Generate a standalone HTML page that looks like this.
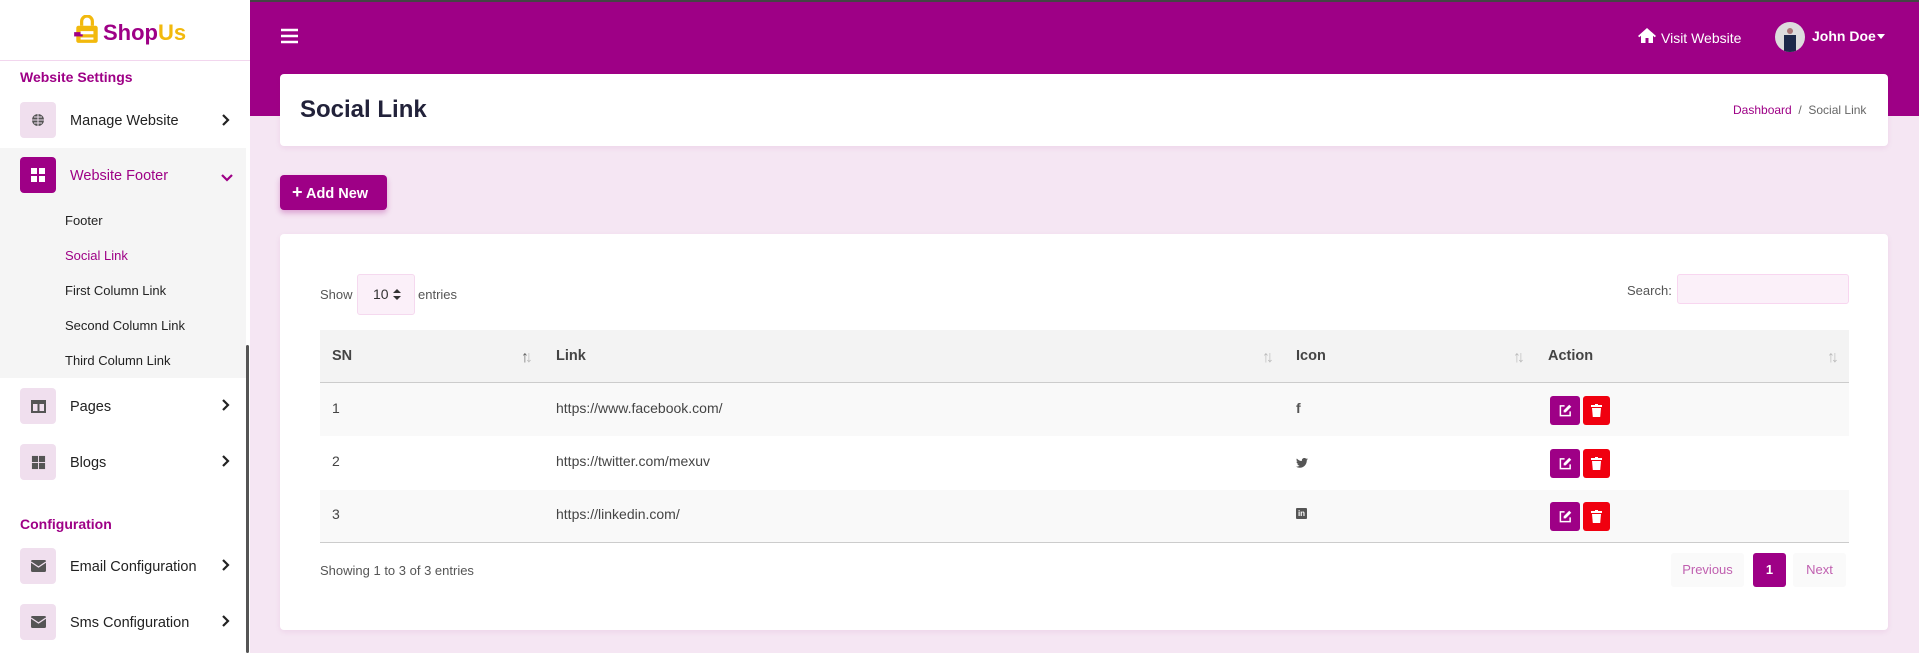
<!DOCTYPE html>
<html><head><meta charset="utf-8"><style>
*{box-sizing:border-box;margin:0;padding:0}
body{width:1919px;height:653px;overflow:hidden;background:#f5e6f3;font-family:"Liberation Sans",sans-serif;position:relative;color:#333}
.a{position:absolute}
.top{left:0;top:0;width:1919px;height:116px;background:#9e0086;border-top:2px solid #444}
.side{left:0;top:0;width:250px;height:653px;background:#fff}
.sh{color:#9e0086;font-weight:bold;font-size:14px}
.ib{width:36px;height:36px;border-radius:4px;background:#f0dfee;display:flex;align-items:center;justify-content:center}
.it{font-size:14.5px;color:#222}
.chev{width:10px;height:12px}
.sub{font-size:13px;color:#222;left:65px}
.card{background:#fff;border-radius:4px;box-shadow:0 2px 6px rgba(150,0,130,.08)}
.th{font-weight:bold;font-size:14.5px;color:#444}
.srt{color:#bbb;font-size:16px;letter-spacing:-4px}
.td{font-size:14px;color:#444}
.btn{width:30px;height:29px;border-radius:3px;display:flex;align-items:center;justify-content:center}
</style></head><body>
<div class="a top"></div>
<div class="a side"></div>
<!-- logo -->
<div class="a" style="left:73px;top:15px;width:28px;height:30px">
<svg width="28" height="30" viewBox="0 0 26 28"><path d="M8 10V6a5 5 0 0 1 10 0v4" fill="none" stroke="#f2b90d" stroke-width="3"/><rect x="3" y="10" width="20" height="16" rx="2" fill="#f2b90d"/><rect x="1" y="16" width="8" height="4" fill="#9e0086"/><path d="M7 15h12v3H7zM7 21h12v2H7z" fill="#fff"/></svg></div>
<div class="a" style="left:103px;top:20px;font-size:22px;font-weight:bold;color:#9e0086">Shop<span style="color:#f2b90d">Us</span></div>
<div class="a" style="left:0;top:60px;width:250px;height:1px;background:#f2d6ee"></div>
<div class="a sh" style="left:20px;top:69px">Website Settings</div>
<div class="a ib" style="left:20px;top:102px"><svg width="14" height="14" viewBox="0 0 14 14"><circle cx="7" cy="7" r="6" fill="#555"/><path d="M1 7h12M7 1v12M3 4h8M3 10h8" stroke="#f0dfee" stroke-width="1"/></svg></div>
<div class="a it" style="left:70px;top:113px">Manage Website</div>
<svg class="a chev" style="left:221px;top:114px" viewBox="0 0 10 12"><path d="M2 1l5 5-5 5" fill="none" stroke="#222" stroke-width="2.2"/></svg>
<div class="a" style="left:0;top:148px;width:246px;height:230px;background:#f5f5f5"></div>
<div class="a ib" style="left:20px;top:157px;background:#9e0086"><svg width="16" height="16" viewBox="0 0 16 16" fill="#fff"><rect x="1" y="1" width="6" height="6"/><rect x="9" y="1" width="6" height="6"/><rect x="1" y="9" width="6" height="6"/><rect x="9" y="9" width="6" height="6"/></svg></div>
<div class="a it" style="left:70px;top:168px;color:#9e0086">Website Footer</div>
<div class="a" style="left:221px;top:170px"><svg width="12" height="10" viewBox="0 0 12 10"><path d="M1 2l5 5 5-5" fill="none" stroke="#9e0086" stroke-width="2.2"/></svg></div>
<div class="a sub" style="top:213px">Footer</div>
<div class="a sub" style="top:248px;color:#9e0086">Social Link</div>
<div class="a sub" style="top:283px">First Column Link</div>
<div class="a sub" style="top:318px">Second Column Link</div>
<div class="a sub" style="top:353px">Third Column Link</div>
<div class="a ib" style="left:20px;top:388px"><svg width="15" height="13" viewBox="0 0 15 13"><rect x="1" y="1" width="13" height="11" fill="none" stroke="#555" stroke-width="2"/><path d="M7.5 1v11M1 3h13" stroke="#555" stroke-width="2"/></svg></div>
<div class="a it" style="left:70px;top:399px">Pages</div>
<svg class="a chev" style="left:221px;top:399px" viewBox="0 0 10 12"><path d="M2 1l5 5-5 5" fill="none" stroke="#222" stroke-width="2.2"/></svg>
<div class="a ib" style="left:20px;top:444px"><svg width="15" height="15" viewBox="0 0 16 16" fill="#555"><rect x="1" y="1" width="6.5" height="6.5"/><rect x="8.5" y="1" width="6.5" height="6.5"/><rect x="1" y="8.5" width="6.5" height="6.5"/><rect x="8.5" y="8.5" width="6.5" height="6.5"/></svg></div>
<div class="a it" style="left:70px;top:455px">Blogs</div>
<svg class="a chev" style="left:221px;top:455px" viewBox="0 0 10 12"><path d="M2 1l5 5-5 5" fill="none" stroke="#222" stroke-width="2.2"/></svg>
<div class="a sh" style="left:20px;top:516px">Configuration</div>
<div class="a ib" style="left:20px;top:548px"><svg width="15" height="12" viewBox="0 0 15 12"><rect x="0" y="0" width="15" height="12" rx="1.5" fill="#555"/><path d="M0 2l7.5 5L15 2" fill="none" stroke="#f0dfee" stroke-width="1.3"/></svg></div>
<div class="a it" style="left:70px;top:559px">Email Configuration</div>
<svg class="a chev" style="left:221px;top:559px" viewBox="0 0 10 12"><path d="M2 1l5 5-5 5" fill="none" stroke="#222" stroke-width="2.2"/></svg>
<div class="a ib" style="left:20px;top:604px"><svg width="15" height="12" viewBox="0 0 15 12"><rect x="0" y="0" width="15" height="12" rx="1.5" fill="#555"/><path d="M0 2l7.5 5L15 2" fill="none" stroke="#f0dfee" stroke-width="1.3"/></svg></div>
<div class="a it" style="left:70px;top:615px">Sms Configuration</div>
<svg class="a chev" style="left:221px;top:615px" viewBox="0 0 10 12"><path d="M2 1l5 5-5 5" fill="none" stroke="#222" stroke-width="2.2"/></svg>
<div class="a" style="left:246px;top:345px;width:3px;height:308px;background:#555;border-radius:2px"></div>
<!-- topbar -->
<svg class="a" style="left:281px;top:28px" width="17" height="16" viewBox="0 0 17 16"><path d="M0 2h17M0 8h17M0 14h17" stroke="#fff" stroke-width="2.6"/></svg>
<div class="a" style="left:1637px;top:27px"><svg width="20" height="17" viewBox="0 0 19 17"><path d="M9.5 1L0.5 9l1.3 1.3 1.7-1.5V16h4.5v-5h3v5h4.5V8.8l1.7 1.5L18.5 9z" fill="#fff"/></svg></div>
<div class="a" style="left:1661px;top:30px;color:#fff;font-size:14px">Visit Website</div>
<div class="a" style="left:1775px;top:22px;width:30px;height:30px;border-radius:50%;background:#ddd;overflow:hidden"><div style="margin:6px auto 0;width:6px;height:6px;border-radius:50%;background:#a77"></div><div style="margin:1px auto 0;width:12px;height:18px;background:#1d2a4a"></div></div>
<div class="a" style="left:1812px;top:28px;color:#fff;font-size:14px;font-weight:bold">John Doe</div>
<div class="a" style="left:1877px;top:34px;border:4px solid transparent;border-top:5px solid #fff"></div>
<!-- header card -->
<div class="a card" style="left:280px;top:74px;width:1608px;height:72px"></div>
<div class="a" style="left:300px;top:96px;font-size:24px;font-weight:bold;color:#22223a">Social Link</div>
<div class="a" style="left:1733px;top:103px;font-size:12px;color:#9e0086">Dashboard <span style="color:#666">&nbsp;/&nbsp; Social Link</span></div>
<!-- add new -->
<div class="a" style="left:280px;top:175px;width:107px;height:35px;background:#9e0086;border-radius:4px;color:#fff;font-weight:bold;font-size:14.5px;line-height:35px;padding-left:12px;box-shadow:0 3px 6px rgba(158,0,134,.3)"><span style="font-size:18px">+</span> Add New</div>
<!-- table card -->
<div class="a card" style="left:280px;top:234px;width:1608px;height:396px"></div>
<div class="a td" style="left:320px;top:287px;font-size:13px;color:#555">Show</div>
<div class="a" style="left:357px;top:274px;width:58px;height:41px;background:#fbf0f9;border:1px solid #f5d9ef;border-radius:3px;font-size:14px;line-height:39px;padding-left:15px;color:#333">10</div>
<svg class="a" style="left:393px;top:289px" width="8" height="11" viewBox="0 0 8 11"><path d="M4 0l4 4H0zM4 11L0 7h8z" fill="#333"/></svg>
<div class="a td" style="left:418px;top:287px;font-size:13px;color:#555">entries</div>
<div class="a td" style="left:1627px;top:283px;font-size:13px;color:#555">Search:</div>
<div class="a" style="left:1677px;top:274px;width:172px;height:30px;background:#fbf0f9;border:1px solid #f8d6f0;border-radius:3px"></div>
<div class="a" style="left:320px;top:330px;width:1529px;height:53px;background:#f3f3f3;border-bottom:1px solid #ccc"></div>
<div class="a" style="left:320px;top:383px;width:1529px;height:53px;background:#f9f9f9"></div>
<div class="a" style="left:320px;top:490px;width:1529px;height:53px;background:#f9f9f9;border-bottom:1px solid #ccc"></div>
<div class="a th" style="left:332px;top:348px">SN</div>
<div class="a th" style="left:556px;top:348px">Link</div>
<div class="a th" style="left:1296px;top:348px">Icon</div>
<div class="a th" style="left:1548px;top:348px">Action</div>
<div class="a srt" style="left:521px;top:349px;color:#666">↑<span style="color:#bbb">↓</span></div>
<div class="a srt" style="left:1262px;top:349px">↑↓</div>
<div class="a srt" style="left:1513px;top:349px">↑↓</div>
<div class="a srt" style="left:1827px;top:349px">↑↓</div>
<div class="a td" style="left:332px;top:400px">1</div><div class="a td" style="left:556px;top:400px">https://www.facebook.com/</div>
<div class="a td" style="left:332px;top:453px">2</div><div class="a td" style="left:556px;top:453px">https://twitter.com/mexuv</div>
<div class="a td" style="left:332px;top:506px">3</div><div class="a td" style="left:556px;top:506px">https://linkedin.com/</div>
<div class="a" style="left:1296px;top:400px;font-weight:bold;font-size:14px;color:#555">f</div>
<div class="a" style="left:1296px;top:455px"><svg width="12" height="10" viewBox="0 0 24 20"><path d="M24 2.4a10 10 0 0 1-2.8.8A5 5 0 0 0 23.3.4a10 10 0 0 1-3.1 1.2A4.9 4.9 0 0 0 11.8 6 14 14 0 0 1 1.7.9a4.9 4.9 0 0 0 1.5 6.6 4.9 4.9 0 0 1-2.2-.6 4.9 4.9 0 0 0 3.9 4.8 5 5 0 0 1-2.2.1 4.9 4.9 0 0 0 4.6 3.4A9.9 9.9 0 0 1 0 17.2 14 14 0 0 0 7.5 19.4c9 0 14-7.5 14-14v-.6A10 10 0 0 0 24 2.4z" fill="#555"/></svg></div>
<div class="a" style="left:1296px;top:508px;width:11px;height:11px;background:#555;border-radius:1px;color:#fff;font-size:8px;font-weight:bold;line-height:12px;text-align:center">in</div>
<div class="a btn" style="left:1550px;top:396px;background:#9e0086"><svg width="13" height="13" viewBox="0 0 14 14"><path d="M6 2H1.5v10.5H12V8" fill="none" stroke="#fff" stroke-width="1.6"/><path d="M11 0.8l2.2 2.2-6 6H5V6.8z" fill="#fff"/></svg></div>
<div class="a btn" style="left:1583px;top:396px;width:27px;background:#f0000f"><svg width="11" height="13" viewBox="0 0 11 13" fill="#fff"><rect x="0" y="1" width="11" height="2"/><rect x="4" y="0" width="3" height="2"/><path d="M1 4h9l-.8 9H1.8z"/></svg></div>
<div class="a btn" style="left:1550px;top:449px;background:#9e0086"><svg width="13" height="13" viewBox="0 0 14 14"><path d="M6 2H1.5v10.5H12V8" fill="none" stroke="#fff" stroke-width="1.6"/><path d="M11 0.8l2.2 2.2-6 6H5V6.8z" fill="#fff"/></svg></div>
<div class="a btn" style="left:1583px;top:449px;width:27px;background:#f0000f"><svg width="11" height="13" viewBox="0 0 11 13" fill="#fff"><rect x="0" y="1" width="11" height="2"/><rect x="4" y="0" width="3" height="2"/><path d="M1 4h9l-.8 9H1.8z"/></svg></div>
<div class="a btn" style="left:1550px;top:502px;background:#9e0086"><svg width="13" height="13" viewBox="0 0 14 14"><path d="M6 2H1.5v10.5H12V8" fill="none" stroke="#fff" stroke-width="1.6"/><path d="M11 0.8l2.2 2.2-6 6H5V6.8z" fill="#fff"/></svg></div>
<div class="a btn" style="left:1583px;top:502px;width:27px;background:#f0000f"><svg width="11" height="13" viewBox="0 0 11 13" fill="#fff"><rect x="0" y="1" width="11" height="2"/><rect x="4" y="0" width="3" height="2"/><path d="M1 4h9l-.8 9H1.8z"/></svg></div>
<div class="a td" style="left:320px;top:563px;font-size:13px;color:#555">Showing 1 to 3 of 3 entries</div>
<div class="a" style="left:1671px;top:553px;width:73px;height:34px;background:#fafafa;border-radius:3px;color:#c060b0;font-size:13px;line-height:34px;text-align:center">Previous</div>
<div class="a" style="left:1753px;top:553px;width:33px;height:34px;background:#9e0086;border-radius:3px;color:#fff;font-size:13px;font-weight:bold;line-height:34px;text-align:center">1</div>
<div class="a" style="left:1793px;top:553px;width:53px;height:34px;background:#fafafa;border-radius:3px;color:#c060b0;font-size:13px;line-height:34px;text-align:center">Next</div>
</body></html>
